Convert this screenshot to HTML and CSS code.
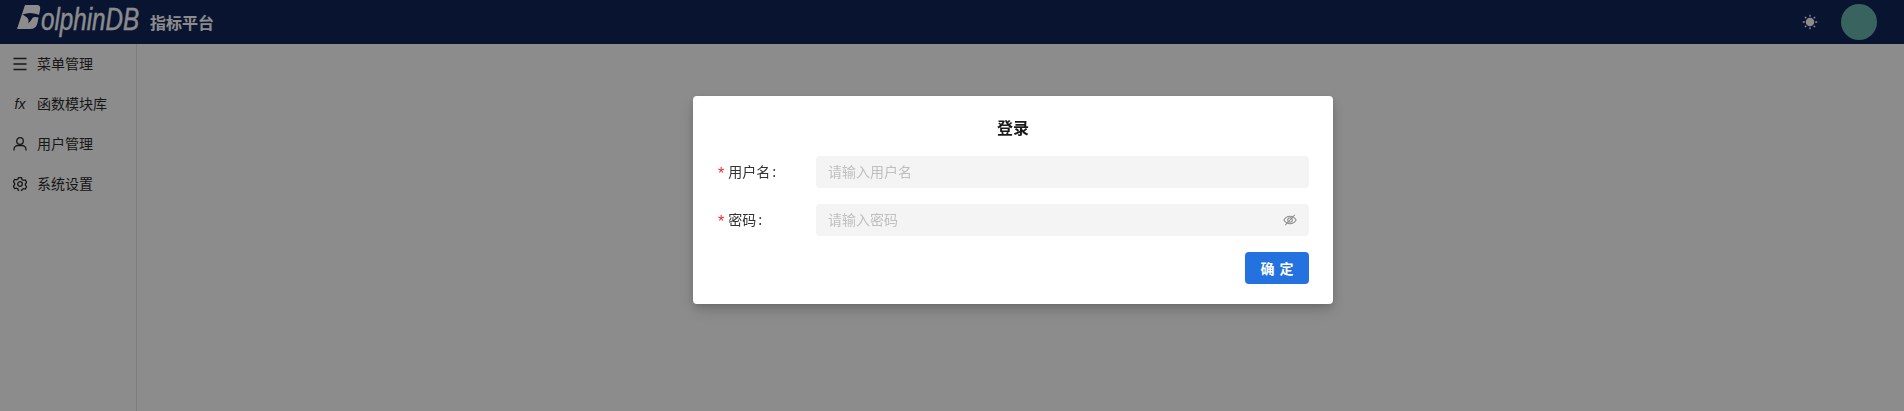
FILE: index.html
```html
<!DOCTYPE html>
<html lang="zh-CN">
<head>
  <meta charset="UTF-8">
  <title>指标平台</title>
  <link rel="stylesheet" href="styles.css">
</head>
<body>

<header class="topbar">
  <div class="brand">
    <svg class="brand-mark" width="24" height="24" viewBox="0 0 24 24">
      <path d="M8 0H20Q24 0 23 5L20.500 18Q19 24 13 24H0Z"/>
      <path class="brand-fin" d="M5.500 9.500Q14 6 24 10.500L23.500 13Q17 11 15.500 13Q14 16 11 18.500Q12.500 14.500 10 12.500Q8 11 5.500 9.500Z"/>
    </svg>
    <div class="brand-text"><span class="brand-name">olphinDB</span></div>
    <span class="brand-title">指标平台</span>
  </div>
  <div class="topbar-tools">
    <svg class="sun" width="16" height="16" viewBox="0 0 16 16">
      <circle cx="8" cy="8" r="3.600"/>
      <path d="M8 .8v2M8 13.200v2M.8 8h2M13.200 8h2M2.900 2.900l1.400 1.400M11.700 11.700l1.400 1.400M2.900 13.100l1.400-1.400M11.700 4.300l1.400-1.400"/>
    </svg>
    <div class="avatar"></div>
  </div>
</header>

<div class="main">
  <nav class="sidebar">
    <div class="nav-item">
      <svg class="nav-icon" viewBox="0 0 14 14"><path d="M.5 1.500h13M.5 7h13M.5 12.500h13"/></svg>
      <span>菜单管理</span>
    </div>
    <div class="nav-item">
      <i class="nav-fx">fx</i>
      <span>函数模块库</span>
    </div>
    <div class="nav-item">
      <svg class="nav-icon" viewBox="0 0 14 14"><circle cx="7" cy="4" r="3.300"/><path d="M1 13.500v-1C1 10 3 8.500 5 8.500h4c2 0 4 1.500 4 4v1"/></svg>
      <span>用户管理</span>
    </div>
    <div class="nav-item">
      <svg class="nav-icon" viewBox="0 0 14 14"><path d="M5.500.7h3l.5 1.800 1.500.9 1.800-.5 1.400 2.500-1.300 1.300v1.600l1.300 1.300-1.400 2.500-1.800-.5-1.500.9-.5 1.800h-3L5 12l-1.500-.9-1.800.5L.3 9.100l1.300-1.300V6.200L.3 4.900l1.400-2.500 1.800.5L5 2z"/><circle cx="7" cy="7" r="2.300"/></svg>
      <span>系统设置</span>
    </div>
  </nav>
  <div class="content"></div>
</div>

<div class="mask">
  <div class="modal">
    <h3 class="modal-title">登录</h3>
    <div class="form-row">
      <label class="form-label"><em>*</em>用户名<b>:</b></label>
      <div class="form-input"><span class="placeholder">请输入用户名</span></div>
    </div>
    <div class="form-row">
      <label class="form-label"><em>*</em>密码<b>:</b></label>
      <div class="form-input">
        <span class="placeholder">请输入密码</span>
        <svg class="eye" width="14" height="14" viewBox="0 0 16 16">
          <path d="M1 8c1.700-2.800 4-4.200 7-4.200s5.300 1.400 7 4.200c-1.700 2.800-4 4.200-7 4.200S2.700 10.800 1 8z"/>
          <circle cx="8" cy="8" r="2.600"/>
          <path d="M2.500 14L13.500 2"/>
        </svg>
      </div>
    </div>
    <div class="form-actions">
      <button class="btn-primary">确 定</button>
    </div>
  </div>
</div>

</body>
</html>
```

FILE: styles.css
```css
* {
  box-sizing: border-box;
  font-family: "Noto Sans CJK SC", "Noto Sans", sans-serif;
}

body {
  margin: 0;
  height: 100vh;
  overflow: hidden;
  background: #fff;
  display: flex;
  flex-direction: column;
}

.topbar {
  height: 44px;
  flex: none;
  background: #11265a;
  display: flex;
  align-items: center;
  justify-content: space-between;
  padding: 0 27px 0 17px;
}

.brand {
  display: flex;
  align-items: center;
}

.brand-mark {
  fill: #fff;
  flex: none;
  margin-bottom: 10px;
}

.brand-fin {
  fill: #11265a;
}

.brand-text {
  width: 109px;
  height: 44px;
}

.brand-name {
  display: inline-block;
  font-family: "Liberation Sans", sans-serif;
  font-style: italic;
  font-size: 31px;
  line-height: 40px;
  color: #fff;
  -webkit-text-stroke: 0.4px #fff;
  transform: scaleX(0.78);
  transform-origin: left center;
}

.brand-title {
  font-size: 16px;
  font-weight: 700;
  color: #fff;
}

.topbar-tools {
  display: flex;
  align-items: center;
  gap: 23px;
}

.sun {
  fill: #fff;
  stroke: #fff;
  stroke-width: 1.300;
}

.avatar {
  width: 36px;
  height: 36px;
  border-radius: 50%;
  background: #69b5ac;
}

.main {
  flex: 1;
  display: flex;
}

.sidebar {
  width: 137px;
  flex: none;
  border-right: 1px solid #e4e4e4;
}

.nav-item {
  height: 40px;
  display: flex;
  align-items: center;
  gap: 10px;
  padding-left: 13px;
  font-size: 14px;
  color: #2b2b2b;
}

.nav-item span {
  padding-bottom: 2px;
}

.nav-icon {
  width: 14px;
  height: 14px;
  fill: none;
  stroke: #2b2b2b;
  stroke-width: 1.300;
  flex: none;
}

.nav-fx {
  width: 14px;
  flex: none;
  font-family: "Liberation Sans", sans-serif;
  font-size: 14px;
  text-align: center;
}

.content {
  flex: 1;
}

.mask {
  position: fixed;
  inset: 0;
  background: rgba(0, 0, 0, 0.45);
  display: flex;
  justify-content: center;
  align-items: flex-start;
  padding: 96px 0 0 122px;
}

.modal {
  width: 640px;
  background: #fff;
  border-radius: 4px;
  box-shadow: 0 6px 16px rgba(0, 0, 0, 0.16), 0 3px 6px rgba(0, 0, 0, 0.12);
  padding: 20px 24px;
}

.modal-title {
  margin: 0 0 16px;
  padding-bottom: 2px;
  height: 24px;
  text-align: center;
  font-size: 16px;
  line-height: 22px;
  font-weight: 700;
  color: #1a1a1a;
}

.form-row {
  display: flex;
  align-items: center;
  height: 32px;
  margin-bottom: 16px;
}

.form-label {
  width: 99px;
  flex: none;
  font-size: 14px;
  color: #333;
  padding: 0 0 2px 1px;
}

.form-label em {
  font-style: normal;
  font-size: 16px;
  line-height: 14px;
  color: #f5222d;
  margin-right: 4px;
  vertical-align: -2px;
  font-family: "Liberation Sans", sans-serif;
}

.form-label b {
  font-weight: 400;
  margin-left: 2px;
}

.form-input {
  flex: 1;
  height: 32px;
  background: #f4f4f4;
  border-radius: 4px;
  padding: 0 12px;
  display: flex;
  align-items: center;
  justify-content: space-between;
}

.placeholder {
  font-size: 14px;
  color: #bfbfbf;
  padding-bottom: 2px;
}

.eye {
  fill: none;
  stroke: #8c8c8c;
  stroke-width: 1.200;
}

.form-actions {
  display: flex;
  justify-content: flex-end;
}

.btn-primary {
  width: 64px;
  height: 32px;
  border: none;
  border-radius: 4px;
  background: #2472e0;
  color: #fff;
  font-size: 14px;
  font-weight: 700;
  letter-spacing: 1px;
  padding: 0 0 0 1px;
}
```
